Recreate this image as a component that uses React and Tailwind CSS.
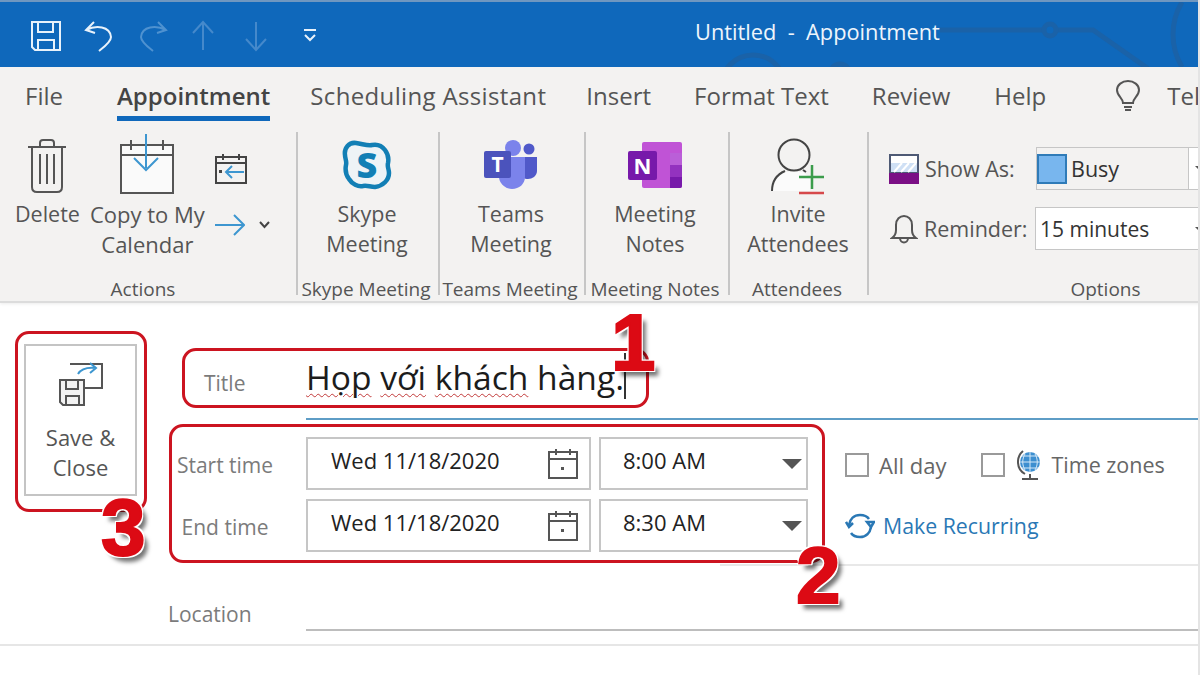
import React from "react";

const Sep = () => <div className="w-[2px] h-[163px] bg-[#c6c6c6] shrink-0" />;

const Group = ({ w, label, children, shift = "", labelShift = "pr-[4px]" }) => (
  <div className={`flex flex-col h-[171px] shrink-0 ${w}`}>
    <div className={`flex-1 flex justify-center min-h-0 ${shift}`}>{children}</div>
    <div className={`text-center text-[19px] leading-[24px] pb-[2px] text-[#555] whitespace-nowrap ${labelShift}`}>{label}</div>
  </div>
);

const Big = ({ icon, lines, size = "text-[21.5px]" }) => (
  <div className={`flex flex-col items-center leading-[30px] text-[#555] whitespace-nowrap ${size}`}>
    <div className="h-[67px] flex items-start justify-center">{icon}</div>
    {lines.map((l) => <div key={l}>{l}</div>)}
  </div>
);

const Trash = () => (
  <svg width="40" height="58" viewBox="0 0 40 58" fill="none" stroke="#555" strokeWidth="2" className="mt-[6px]">
    <path d="M1 9h38M13 9V5q0-3 3-3h8q3 0 3 3v4M5 9v40q0 5 5 5h20q5 0 5-5V9M13 16v30M20 16v30M27 16v30" />
  </svg>
);
const BigCal = () => (
  <svg width="56" height="62" viewBox="0 0 56 62" fill="none" className="mt-[2px]">
    <path d="M2 11h52v48H2z" fill="#fafafa" stroke="#555" strokeWidth="2" />
    <path d="M2 21h52M12 6v10M44 6v10" stroke="#555" strokeWidth="2" />
    <path d="M27 0v34M15 24l12 12 12-12" stroke="#3d96d0" strokeWidth="2" />
  </svg>
);
const SmallCal = () => (
  <svg width="32" height="32" viewBox="0 0 32 32" fill="none">
    <path d="M1 4h30v26H1zM1 10h30M8 1v6M24 1v6" stroke="#444" strokeWidth="2" />
    <path d="M29 19H11M17 13l-6 6 6 6" stroke="#3d96d0" strokeWidth="2" />
    <rect x="4" y="17" width="3" height="3" fill="#444" />
  </svg>
);
const Skype = () => (
  <svg width="50" height="50" viewBox="0 0 50 50" className="mt-[8px]">
    <path d="M14 3C7 2 2 8 3 15c0 4 2 6 1 10-1 5 0 10 3 14 3 5 9 8 14 7 4-1 7 1 12 1 8-1 14-7 14-14 0-4-2-6-1-10 1-5 0-9-3-13S35 4 30 5c-4 1-9-1-16-2z" fill="#eef3f6" stroke="#127fb5" strokeWidth="4.500" />
    <text x="25" y="37.500" textAnchor="middle" fontFamily="Open Sans" fontWeight="800" fontSize="36" fill="#127fb5">S</text>
  </svg>
);
const Teams = () => (
  <svg width="54" height="50" viewBox="0 0 54 50" className="mt-[7px]">
    <circle cx="29" cy="9" r="8" fill="#7b83eb" />
    <circle cx="45" cy="10" r="5.500" fill="#5059c9" />
    <path d="M38 18h15v14c0 5-5 8-9 8s-6-2-6-4z" fill="#5059c9" />
    <path d="M15 18h26v20c0 7-6 12-13 12s-13-6-13-12z" fill="#7b83eb" />
    <rect x="0" y="12" width="27" height="27" rx="2" fill="#4b53bc" />
    <text x="13.500" y="33" textAnchor="middle" fontFamily="Open Sans" fontWeight="700" fontSize="21" fill="#fff">T</text>
  </svg>
);
const OneNote = () => (
  <svg width="54" height="46" viewBox="0 0 54 46" className="mt-[10px]">
    <path d="M14 2q0-2 2-2h36q2 0 2 2v42q0 2-2 2H16q-2 0-2-2z" fill="#c053d6" />
    <rect x="42" y="11" width="12" height="12" fill="#ba5fd8" />
    <rect x="42" y="23" width="12" height="12" fill="#9332bf" />
    <path d="M42 35h12v9q0 2-2 2H42z" fill="#7719aa" />
    <rect x="0" y="9" width="29" height="29" rx="2" fill="#7719aa" />
    <text x="14.500" y="32" textAnchor="middle" fontFamily="Open Sans" fontWeight="700" fontSize="22" fill="#fff">N</text>
  </svg>
);
const Invite = () => (
  <svg width="56" height="58" viewBox="0 0 56 58" fill="none" className="mt-[6px]">
    <path d="M3 53c1-11 6-18 12-19h18l7 6v13z" fill="#fbfbfb" />
    <circle cx="24" cy="17" r="15.500" stroke="#444" strokeWidth="2" />
    <path d="M2 53c0-11 6-17 13-20M33 32l3 2" stroke="#444" strokeWidth="2" />
    <path d="M42 27v24M29 39h25" stroke="#3b9c4b" strokeWidth="2.500" />
    <path d="M29 55h25" stroke="#d6494b" strokeWidth="2.500" />
  </svg>
);
const CalIcon = () => (
  <svg width="32" height="32" viewBox="0 0 32 32" fill="none">
    <path d="M2 4h28v26H2zM2 11h28M9 1v6M23 1v6" stroke="#555" strokeWidth="2" />
    <rect x="14" y="19" width="3" height="3" fill="#555" />
  </svg>
);
const Caret = () => <div className="w-0 h-0 border-x-[10px] border-x-transparent border-t-[10px] border-t-[#555]" />;
const MiniCaret = () => <div className="w-0 h-0 border-x-[5px] border-x-transparent border-t-[5px] border-t-[#555] shrink-0" />;

const DateRow = ({ label, date, time }) => (
  <div className="flex items-center h-[53px]">
    <div className="w-[156px] pr-[6px] pt-[4px] text-center text-[21px] text-[#7b7b7b] leading-none shrink-0">{label}</div>
    <div className="w-[285px] h-[53px] bg-white border-2 border-[#c6c6c6] flex items-center justify-between pl-[23px] pr-[10px] text-[22px] text-[#222]">
      <span className="-mt-[7px]">{date}</span><CalIcon />
    </div>
    <div className="w-[209px] h-[53px] ml-[8px] bg-white border-2 border-[#c6c6c6] flex items-center justify-between pl-[22px] pr-[4px] text-[22px] text-[#222]">
      <span className="-mt-[7px]">{time}</span><Caret />
    </div>
  </div>
);

const Wave = ({ children }) => <span className="underline decoration-wavy decoration-[#c23a3a] decoration-1 underline-offset-[3px]">{children}</span>;

const Num = ({ className, children }) => (
  <div className={`absolute font-['Liberation_Sans'] font-bold text-[80px] leading-none text-[#dc0a14] [-webkit-text-stroke:2px_#dc0a14] [text-shadow:-2px_-2px_0_#fff,2px_-2px_0_#fff,-2px_2px_0_#fff,2px_2px_0_#fff,5px_6px_4px_rgba(0,0,0,0.55)] ${className}`}>{children}</div>
);
const Box = ({ className }) => <div className={`absolute border-[3px] border-[#cc1420] rounded-[14px] ${className}`} />;

export default function App() {
  return (
    <div className="relative w-[1200px] h-[675px] overflow-hidden bg-white font-['Open_Sans',sans-serif]">
      {/* title bar */}
      <div className="relative h-[67px] bg-[#0f68bb] border-t-2 border-[#6f97c0] flex items-center overflow-hidden">
        <svg width="1200" height="65" viewBox="0 0 1200 65" fill="none" stroke="#1a62a8" strokeWidth="5" className="absolute left-0 top-0">
          <path d="M940 28h104M1056 28h37l57 40M1182 0c-12 20-12 45 0 65" />
          <circle cx="1050" cy="28" r="6" />
          <circle cx="753" cy="85" r="32" />
          <circle cx="840" cy="72" r="10" />
        </svg>
        <div className="relative flex items-center pl-[30px] mt-[2px]">
          <svg width="32" height="32" viewBox="0 0 32 32" fill="none" stroke="#e8f2fb" strokeWidth="2">
            <path d="M2 2h28v28H5l-3-3zM8 2v10h15V2M8 30V20h16v10" />
          </svg>
          <svg width="30" height="32" viewBox="0 0 30 32" fill="none" stroke="#e8f2fb" strokeWidth="2" className="ml-[22px]">
            <path d="M10 2L2 10l9 3M2 10c10-5 24-4 25 7 0 5-7 10-12 14" />
          </svg>
          <svg width="30" height="32" viewBox="0 0 30 32" fill="none" stroke="#4f92d0" strokeWidth="2" className="ml-[24px]">
            <path d="M20 2l8 8-9 3M28 10C18 5 4 6 3 17c0 5 7 10 12 14" />
          </svg>
          <svg width="22" height="32" viewBox="0 0 22 32" fill="none" stroke="#4589cb" strokeWidth="2" className="ml-[24px]">
            <path d="M11 30V2M1 13L11 2l10 11" />
          </svg>
          <svg width="22" height="32" viewBox="0 0 22 32" fill="none" stroke="#4589cb" strokeWidth="2" className="ml-[31px]">
            <path d="M11 2v28M1 19l10 11 10-11" />
          </svg>
          <svg width="14" height="14" viewBox="0 0 14 14" fill="none" stroke="#e8f2fb" strokeWidth="2" className="ml-[36px] -mt-[1px]">
            <path d="M1 2h12M2 7l5 5 5-5" />
          </svg>
        </div>
        <div className="absolute left-[695px] top-[15px] text-[21.8px] leading-[30px] text-[#eef5fc] whitespace-pre">Untitled  -  Appointment</div>
      </div>

      {/* ribbon */}
      <div className="h-[236px] bg-[#f3f2f1] border-b-2 border-[#dcdcdc] shadow-[0_1px_3px_rgba(0,0,0,0.08)]">
        <div className="relative h-[65px] flex items-start pt-[13px] text-[24px] leading-[32px] text-[#555] whitespace-nowrap overflow-hidden">
          <span className="ml-[25px] shrink-0">File</span>
          <span className="ml-[54px] shrink-0 text-[#444] font-semibold border-b-[5px] border-[#0f68bb] h-[41px]">Appointment</span>
          <span className="ml-[40px] shrink-0 tracking-[0.35px]">Scheduling Assistant</span>
          <span className="ml-[40px] shrink-0">Insert</span>
          <span className="ml-[43px] shrink-0">Format Text</span>
          <span className="ml-[43px] shrink-0">Review</span>
          <span className="ml-[44px] shrink-0">Help</span>
          <svg width="26" height="32" viewBox="0 0 26 32" fill="none" stroke="#555" strokeWidth="2" className="ml-[69px] shrink-0">
            <path d="M8 23c0-5-6-7-6-13C2 5 7 1 13 1s11 4 11 9c0 6-6 8-6 13zM9 27h8M10 30h6" />
          </svg>
          <span className="ml-[26px] shrink-0">Tell</span>
        </div>
        <div className="flex items-start">
          <div className="flex h-[171px] w-[296px] shrink-0 flex-col">
            <div className="flex-1 flex pl-[15px] min-h-0">
              <Big icon={<Trash />} lines={["Delete"]} />
              <div className="ml-[10px]"><Big size="text-[22px]" icon={<BigCal />} lines={["Copy to My", "Calendar"]} /></div>
              <div className="ml-[10px] flex flex-col pt-[21px]">
                <SmallCal />
                <div className="flex items-center mt-[29px] gap-[14px]">
                  <svg width="30" height="22" viewBox="0 0 30 22" fill="none" stroke="#3d96d0" strokeWidth="2"><path d="M0 11h29M19 1l10 10-10 10" /></svg>
                  <svg width="11" height="8" viewBox="0 0 11 8" fill="none" stroke="#444" strokeWidth="2"><path d="M1 1l4.500 5L10 1" /></svg>
                </div>
              </div>
            </div>
            <div className="text-center text-[19px] leading-[24px] pb-[2px] text-[#555] pr-[10px]">Actions</div>
          </div>
          <Sep />
          <Group w="w-[140px]" shift="pr-[2px]" label="Skype Meeting"><Big icon={<Skype />} lines={["Skype", "Meeting"]} /></Group>
          <Sep />
          <Group w="w-[144px]" shift="pr-[2px]" label="Teams Meeting"><Big icon={<Teams />} lines={["Teams", "Meeting"]} /></Group>
          <Sep />
          <Group w="w-[142px]" shift="pr-[4px]" label="Meeting Notes"><Big icon={<OneNote />} lines={["Meeting", "Notes"]} /></Group>
          <Sep />
          <Group w="w-[137px]" shift="pr-[1px]" labelShift="pr-[3px]" label="Attendees"><Big icon={<Invite />} lines={["Invite", "Attendees"]} /></Group>
          <Sep />
          <div className="flex-1 h-[171px] flex flex-col min-w-0 overflow-hidden text-[#555]">
            <div className="flex-1 flex flex-col pl-[20px] pt-[15px] gap-[17px] text-[21.5px]">
              <div className="flex items-center h-[43px]">
                <svg width="30" height="30" viewBox="0 0 30 30" className="shrink-0">
                  <rect width="30" height="30" fill="#4e5a75" />
                  <rect x="2" y="2" width="26" height="7" fill="#fff" />
                  <rect x="2" y="9" width="26" height="9" fill="#cfe0f5" />
                  <path d="M5 18l8-9M12 18l8-9M19 18l8-9" stroke="#fff" strokeWidth="2" />
                  <rect x="0" y="19" width="30" height="11" fill="#7a0f85" />
                </svg>
                <span className="ml-[6px] pt-[2px] w-[111px] shrink-0">Show As:</span>
                <div className="w-[153px] h-[43px] flex items-center bg-[#f3f2f1] border border-[#c6c6c6] shrink-0">
                  <div className="w-[30px] h-[30px] bg-[#78b6ee] border-2 border-[#2f7bb8]" />
                  <span className="ml-[4px] pt-[2px] text-[#333]">Busy</span>
                </div>
                <div className="h-[43px] w-[20px] bg-white border border-[#c6c6c6] border-l-0 shrink-0 flex items-center pl-[6px]"><MiniCaret /></div>
              </div>
              <div className="flex items-center h-[43px]">
                <svg width="28" height="30" viewBox="0 0 28 30" fill="none" stroke="#555" strokeWidth="2" className="shrink-0 ml-[1px]">
                  <path d="M2 24c3-2 4-4 4-8V11c0-6 4-9 8-9s8 3 8 9v5c0 4 1 6 4 8zM10 24c0 6 8 6 8 0" />
                </svg>
                <span className="ml-[6px] pt-[2px] w-[111px] shrink-0">Reminder:</span>
                <div className="w-[180px] h-[43px] flex items-center bg-white border border-[#c6c6c6] shrink-0 pl-[4px] pt-[2px] text-[21px] text-[#333]">
                  15 minutes<span className="ml-[46px]"><MiniCaret /></span>
                </div>
              </div>
            </div>
            <div className="text-center text-[19px] leading-[24px] pb-[2px] pl-[142px]">Options</div>
          </div>
        </div>
      </div>

      {/* form */}
      <div className="flex h-[343px] border-b-2 border-[#e6e6e6]">
        <div className="w-[150px] shrink-0 pl-[24px] pt-[41px]">
          <div className="w-[113px] h-[152px] border-2 border-[#c4c4c4] flex flex-col items-center text-[22px] leading-[30px] text-[#555]">
            <svg width="44" height="44" viewBox="0 0 44 44" fill="none" className="mt-[16px] mb-[16px]">
              <path d="M11 2h32v24H26" stroke="#555" strokeWidth="2" />
              <path d="M19 12c3-5 9-7 18-6M31 1l6 5-6 5" stroke="#3d96d0" strokeWidth="2" />
              <path d="M1 18h24v25H4l-3-3z" fill="#f3f3f3" stroke="#555" strokeWidth="2" />
              <path d="M7 18v9h12v-9M7 43v-9h13v9" stroke="#555" strokeWidth="2" />
            </svg>
            <span>Save &amp;</span>
            <span>Close</span>
          </div>
        </div>
        <div className="flex-1 min-w-0">
          <div className="flex h-[117px] border-b-2 border-[#5e9dc6] ml-[156px]">
            <div className="relative pt-[50px] text-[33.6px] leading-[48px] text-[#1c1c1c] whitespace-nowrap">
              <Wave>Họp</Wave> <Wave>với</Wave> <Wave>khách</Wave> hàng.<span className="inline-block w-[2px] h-[46px] bg-[#333] align-top" />
            </div>
          </div>
          <div className="flex flex-col gap-[9px] pt-[17px]">
            <DateRow label="Start time" date="Wed 11/18/2020" time="8:00 AM" />
            <DateRow label="End time" date="Wed 11/18/2020" time="8:30 AM" />
          </div>
          <div className="ml-[570px] border-b-2 border-[#e8e8e8] h-[14px]" />
          <div className="flex items-end h-[65px] border-b-2 border-[#bdbdbd] ml-[156px] relative">
            <span className="absolute left-[-138px] bottom-[1px] text-[21px] leading-[28px] text-[#7b7b7b]">Location</span>
          </div>
        </div>
      </div>

      {/* title label + right-hand options sit beside the form rows */}
      <span className="absolute left-[204px] top-[369px] text-[21px] leading-[28px] text-[#7b7b7b]">Title</span>
      <div className="absolute left-[845px] top-[449px] flex flex-col gap-[30px] text-[21.5px] leading-[30px]">
        <div className="flex items-center text-[#666]">
          <div className="w-[24px] h-[24px] border-2 border-[#9a9a9a]" />
          <span className="ml-[10px] text-[22px]">All day</span>
          <div className="w-[24px] h-[24px] border-2 border-[#9a9a9a] ml-[35px]" />
          <svg width="26" height="32" viewBox="0 0 26 32" className="ml-[12px]">
            <circle cx="13" cy="13" r="10" fill="#3d8fd0" />
            <path d="M3 13h20M13 3v20M5 7h16M5 19h16M8 5c-3 5-3 11 0 16M18 5c3 5 3 11 0 16" stroke="#d5e8f7" strokeWidth="1" fill="none" />
            <path d="M6 2c-7 6-7 18 2 23" stroke="#555" strokeWidth="2" fill="none" />
            <path d="M5 30h16M13 25v5" stroke="#555" strokeWidth="2" />
          </svg>
          <span className="ml-[8px]">Time zones</span>
        </div>
        <div className="flex items-center text-[#2a78b5]">
          <svg width="30" height="26" viewBox="0 0 30 26" fill="none" stroke="#2a78b5" strokeWidth="2.500">
            <path d="M4 12C5 6 9 2 15 2c4 0 7 1 9 4M26 14c-1 6-5 10-11 10-4 0-7-1-9-4" />
            <path d="M1 9l3 5 4-4M22 9h7l-3 5z" />
          </svg>
          <span className="ml-[8px] text-[21.3px]">Make Recurring</span>
        </div>
      </div>

      {/* annotations */}
      <Box className="left-[15px] top-[331px] w-[132px] h-[181px]" />
      <Box className="left-[182px] top-[348px] w-[467px] h-[60px]" />
      <Box className="left-[169px] top-[424px] w-[656px] h-[139px]" />
      <Num className="left-[611px] top-[303px]">1</Num>
      <Num className="left-[796px] top-[536px]">2</Num>
      <Num className="left-[101px] top-[488px]">3</Num>
      <div className="absolute right-0 top-0 w-[2px] h-full bg-[#e4e4e4]" />
    </div>
  );
}
